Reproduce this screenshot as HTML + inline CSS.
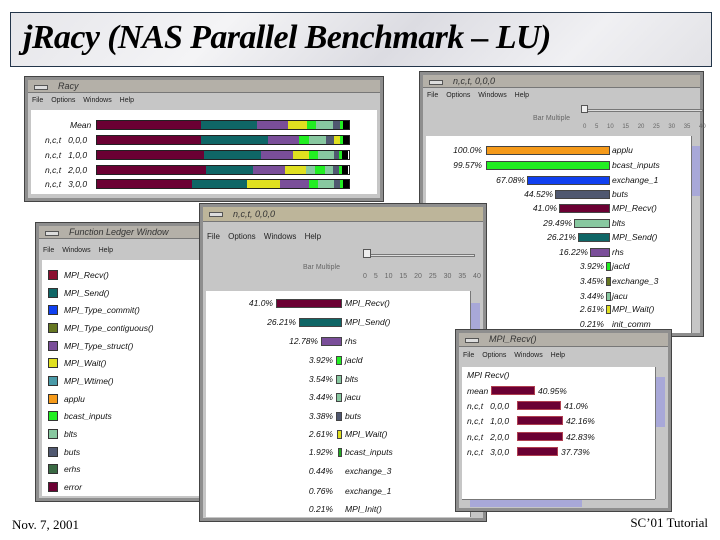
<!DOCTYPE html>
<html><head><meta charset="utf-8"><style>
*{margin:0;padding:0;box-sizing:border-box}
body{width:720px;height:540px;background:#fff;position:relative;overflow:hidden;font-family:"Liberation Sans",sans-serif}
.abs{position:absolute}
.title{left:10px;top:12px;width:702px;height:55px;border:1px solid #23354a;background:linear-gradient(135deg,#e6e6ea,#f4f4f6 30%,#dcdce2 55%,#f0f0f3 80%,#e2e2e6)}
.title span{position:absolute;left:12px;top:6px;font:italic bold 34px "Liberation Serif",serif;color:#000;letter-spacing:-0.6px}
.win{position:absolute;background:#c6c6c6;border:3px solid #8e8e8e;outline:1px solid #444}
.tb{position:absolute;left:0;right:0;top:0;height:13px;background:#b4b0a8;border-bottom:1px solid #777;font:italic 9px "Liberation Sans",sans-serif;color:#333;padding-left:30px;line-height:13px}
.tb:before{content:"";position:absolute;left:6px;top:5px;width:12px;height:3px;background:#ddd;border:1px solid #555}
.menu{position:absolute;left:4px;font-size:7px;color:#222;word-spacing:6px}
.wh{position:absolute;background:#fff;border:1px solid #888}
.t{position:absolute;font:italic 8.5px "Liberation Sans",sans-serif;color:#111;white-space:nowrap}
.b{position:absolute;height:9px;border:1px solid #444}
.sw{position:absolute;width:10px;height:10px;border:1px solid #333}
.sb{position:absolute;background:#bfbfcf;border-left:1px solid #777}
.seg{display:flex;position:absolute;height:10px;border:1px solid #222}
.seg i{display:block;height:100%}
.foot{position:absolute;font:13px "Liberation Serif",serif;color:#000}
</style></head><body>
<div class="abs title"><span>jRacy (NAS Parallel Benchmark – LU)</span></div>

<!-- W1 -->
<div class="win" style="left:25px;top:77px;width:358px;height:124px">
 <div class="tb">Racy</div>
 <div class="menu" style="top:17px">File Options Windows Help</div>
 <div class="wh" style="left:3px;top:30px;width:346px;height:84px;border:none"></div>
</div>
<div class="t" style="left:70px;top:120px">Mean</div>
<div class="t" style="left:45px;top:135px">n,c,t &nbsp; 0,0,0</div>
<div class="t" style="left:45px;top:150px">n,c,t &nbsp; 1,0,0</div>
<div class="t" style="left:45px;top:165px">n,c,t &nbsp; 2,0,0</div>
<div class="t" style="left:45px;top:179px">n,c,t &nbsp; 3,0,0</div>
<div class="seg" style="left:96px;top:120px;width:254px"><i style="width:104px;background:#6b0033"></i><i style="width:56px;background:#0f6666"></i><i style="width:31px;background:#7a4e99"></i><i style="width:19px;background:#e0e020"></i><i style="width:9px;background:#22ee22"></i><i style="width:9px;background:#88c8a0"></i><i style="width:8px;background:#88c8a0"></i><i style="width:7px;background:#505870"></i><i style="width:3px;background:#22ee22"></i><i style="width:6px;background:#000"></i></div>
<div class="seg" style="left:96px;top:135px;width:254px"><i style="width:104px;background:#6b0033"></i><i style="width:67px;background:#0f6666"></i><i style="width:31px;background:#7a4e99"></i><i style="width:10px;background:#22ee22"></i><i style="width:9px;background:#88c8a0"></i><i style="width:8px;background:#88c8a0"></i><i style="width:8px;background:#505870"></i><i style="width:6px;background:#e0e020"></i><i style="width:3px;background:#22ee22"></i><i style="width:6px;background:#000"></i></div>
<div class="seg" style="left:96px;top:150px;width:254px"><i style="width:107px;background:#6b0033"></i><i style="width:57px;background:#0f6666"></i><i style="width:32px;background:#7a4e99"></i><i style="width:16px;background:#e0e020"></i><i style="width:9px;background:#22ee22"></i><i style="width:8px;background:#88c8a0"></i><i style="width:8px;background:#88c8a0"></i><i style="width:5px;background:#505870"></i><i style="width:3px;background:#22ee22"></i><i style="width:6px;background:#000"></i></div>
<div class="seg" style="left:96px;top:165px;width:254px"><i style="width:109px;background:#6b0033"></i><i style="width:47px;background:#0f6666"></i><i style="width:32px;background:#7a4e99"></i><i style="width:21px;background:#e0e020"></i><i style="width:9px;background:#88c8a0"></i><i style="width:10px;background:#22ee22"></i><i style="width:8px;background:#88c8a0"></i><i style="width:6px;background:#505870"></i><i style="width:3px;background:#22ee22"></i><i style="width:6px;background:#000"></i></div>
<div class="seg" style="left:96px;top:179px;width:254px"><i style="width:96px;background:#6b0033"></i><i style="width:55px;background:#0f6666"></i><i style="width:33px;background:#e0e020"></i><i style="width:30px;background:#7a4e99"></i><i style="width:9px;background:#22ee22"></i><i style="width:8px;background:#88c8a0"></i><i style="width:8px;background:#88c8a0"></i><i style="width:6px;background:#505870"></i><i style="width:3px;background:#22ee22"></i><i style="width:6px;background:#000"></i></div>

<!-- W2 -->
<div class="win" style="left:420px;top:72px;width:283px;height:264px">
 <div class="tb">n,c,t, 0,0,0</div>
 <div class="menu" style="top:17px">File Options Windows Help</div>
 <div class="t" style="left:110px;top:40px;font-size:7px;font-style:normal;color:#666">Bar Multiple</div>
 <div class="abs" style="left:160px;top:34px;width:120px;height:3px;border:1px solid #777;background:#ddd"></div>
 <div class="abs" style="left:158px;top:30px;width:7px;height:8px;background:#eee;border:1px solid #555"></div>
 <div class="t" style="left:160px;top:49px;font-size:6px;font-style:normal;color:#666;word-spacing:7px">0 5 10 15 20 25 30 35 40</div>
 <div class="wh" style="left:3px;top:61px;width:265px;height:197px;border:none"></div>
 <div class="sb" style="left:268px;top:61px;width:9px;height:197px;background:linear-gradient(#c6c6c6 0,#c6c6c6 10px,#a8a8d8 10px,#a8a8d8 60px,#c6c6c6 60px)"></div>
</div>
<div class="t" style="right:238px;top:145px">100.0%</div><div class="b" style="left:486px;top:146px;width:124px;background:#f59a1a"></div><div class="t" style="left:612px;top:145px">applu</div>
<div class="t" style="right:238px;top:160px">99.57%</div><div class="b" style="left:486px;top:161px;width:124px;background:#22ee22"></div><div class="t" style="left:612px;top:160px">bcast_inputs</div>
<div class="t" style="right:195px;top:175px">67.08%</div><div class="b" style="left:527px;top:176px;width:83px;background:#1040f0"></div><div class="t" style="left:612px;top:175px">exchange_1</div>
<div class="t" style="right:167px;top:189px">44.52%</div><div class="b" style="left:555px;top:190px;width:55px;background:#505870"></div><div class="t" style="left:612px;top:189px">buts</div>
<div class="t" style="right:163px;top:203px">41.0%</div><div class="b" style="left:559px;top:204px;width:51px;background:#6b0033"></div><div class="t" style="left:612px;top:203px">MPI_Recv()</div>
<div class="t" style="right:148px;top:218px">29.49%</div><div class="b" style="left:574px;top:219px;width:36px;background:#88c8a0"></div><div class="t" style="left:612px;top:218px">blts</div>
<div class="t" style="right:144px;top:232px">26.21%</div><div class="b" style="left:578px;top:233px;width:32px;background:#0f6666"></div><div class="t" style="left:612px;top:232px">MPI_Send()</div>
<div class="t" style="right:132px;top:247px">16.22%</div><div class="b" style="left:590px;top:248px;width:20px;background:#7a4e99"></div><div class="t" style="left:612px;top:247px">rhs</div>
<div class="t" style="right:116px;top:261px">3.92%</div><div class="b" style="left:606px;top:262px;width:5px;background:#22ee22"></div><div class="t" style="left:612px;top:261px">jacld</div>
<div class="t" style="right:116px;top:276px">3.45%</div><div class="b" style="left:606px;top:277px;width:5px;background:#667722"></div><div class="t" style="left:612px;top:276px">exchange_3</div>
<div class="t" style="right:116px;top:291px">3.44%</div><div class="b" style="left:606px;top:292px;width:5px;background:#88c8a0"></div><div class="t" style="left:612px;top:291px">jacu</div>
<div class="t" style="right:116px;top:304px">2.61%</div><div class="b" style="left:606px;top:305px;width:5px;background:#e0e020"></div><div class="t" style="left:612px;top:304px">MPI_Wait()</div>
<div class="t" style="right:116px;top:319px">0.21%</div><div class="t" style="left:612px;top:319px">init_comm</div>

<!-- W3 -->
<div class="win" style="left:36px;top:223px;width:170px;height:278px">
 <div class="tb">Function Ledger Window</div>
 <div class="menu" style="top:21px">File Windows Help</div>
 <div class="wh" style="left:3px;top:34px;width:160px;height:236px;border:none"></div>
</div>
<div class="sw" style="left:48px;top:270px;background:#8b1030"></div><div class="t" style="left:64px;top:270px">MPI_Recv()</div>
<div class="sw" style="left:48px;top:288px;background:#0f6666"></div><div class="t" style="left:64px;top:288px">MPI_Send()</div>
<div class="sw" style="left:48px;top:305px;background:#1040f0"></div><div class="t" style="left:64px;top:305px">MPI_Type_commit()</div>
<div class="sw" style="left:48px;top:323px;background:#667722"></div><div class="t" style="left:64px;top:323px">MPI_Type_contiguous()</div>
<div class="sw" style="left:48px;top:341px;background:#7a4e99"></div><div class="t" style="left:64px;top:341px">MPI_Type_struct()</div>
<div class="sw" style="left:48px;top:358px;background:#e0e020"></div><div class="t" style="left:64px;top:358px">MPI_Wait()</div>
<div class="sw" style="left:48px;top:376px;background:#4a9aa8"></div><div class="t" style="left:64px;top:376px">MPI_Wtime()</div>
<div class="sw" style="left:48px;top:394px;background:#f59a1a"></div><div class="t" style="left:64px;top:394px">applu</div>
<div class="sw" style="left:48px;top:411px;background:#22ee22"></div><div class="t" style="left:64px;top:411px">bcast_inputs</div>
<div class="sw" style="left:48px;top:429px;background:#88c8a0"></div><div class="t" style="left:64px;top:429px">blts</div>
<div class="sw" style="left:48px;top:447px;background:#505870"></div><div class="t" style="left:64px;top:447px">buts</div>
<div class="sw" style="left:48px;top:464px;background:#3a6a44"></div><div class="t" style="left:64px;top:464px">erhs</div>
<div class="sw" style="left:48px;top:482px;background:#6b0033"></div><div class="t" style="left:64px;top:482px">error</div>

<!-- W4 -->
<div class="win" style="left:200px;top:204px;width:286px;height:317px">
 <div class="tb" style="background:#bdb59a;height:15px;line-height:15px">n,c,t, 0,0,0</div>
 <div class="menu" style="top:25px;font-size:8px">File Options Windows Help</div>
 <div class="t" style="left:100px;top:57px;font-size:7px;font-style:normal;color:#666">Bar Multiple</div>
 <div class="abs" style="left:162px;top:47px;width:110px;height:3px;border:1px solid #777;background:#ddd"></div>
 <div class="abs" style="left:160px;top:42px;width:8px;height:9px;background:#eee;border:1px solid #555"></div>
 <div class="t" style="left:160px;top:66px;font-size:7px;font-style:normal;color:#666;word-spacing:5px">0 5 10 15 20 25 30 35 40</div>
 <div class="wh" style="left:3px;top:84px;width:264px;height:226px;border:none"></div>
 <div class="sb" style="left:267px;top:84px;width:10px;height:226px;background:linear-gradient(#c6c6c6 0,#c6c6c6 12px,#a8a8d8 12px,#a8a8d8 120px,#c6c6c6 120px)"></div>
</div>
<div class="t" style="right:447px;top:298px">41.0%</div><div class="b" style="left:276px;top:299px;width:66px;background:#6b0033"></div><div class="t" style="left:345px;top:298px">MPI_Recv()</div>
<div class="t" style="right:424px;top:317px">26.21%</div><div class="b" style="left:299px;top:318px;width:43px;background:#0f6666"></div><div class="t" style="left:345px;top:317px">MPI_Send()</div>
<div class="t" style="right:402px;top:336px">12.78%</div><div class="b" style="left:321px;top:337px;width:21px;background:#7a4e99"></div><div class="t" style="left:345px;top:336px">rhs</div>
<div class="t" style="right:387px;top:355px">3.92%</div><div class="b" style="left:336px;top:356px;width:6px;background:#22ee22"></div><div class="t" style="left:345px;top:355px">jacld</div>
<div class="t" style="right:387px;top:374px">3.54%</div><div class="b" style="left:336px;top:375px;width:6px;background:#88c8a0"></div><div class="t" style="left:345px;top:374px">blts</div>
<div class="t" style="right:387px;top:392px">3.44%</div><div class="b" style="left:336px;top:393px;width:6px;background:#88c8a0"></div><div class="t" style="left:345px;top:392px">jacu</div>
<div class="t" style="right:387px;top:411px">3.38%</div><div class="b" style="left:336px;top:412px;width:6px;background:#505870"></div><div class="t" style="left:345px;top:411px">buts</div>
<div class="t" style="right:387px;top:429px">2.61%</div><div class="b" style="left:337px;top:430px;width:5px;background:#e0e020"></div><div class="t" style="left:345px;top:429px">MPI_Wait()</div>
<div class="t" style="right:387px;top:447px">1.92%</div><div class="b" style="left:338px;top:448px;width:4px;background:#22aa22"></div><div class="t" style="left:345px;top:447px">bcast_inputs</div>
<div class="t" style="right:387px;top:466px">0.44%</div><div class="t" style="left:345px;top:466px">exchange_3</div>
<div class="t" style="right:387px;top:486px">0.76%</div><div class="t" style="left:345px;top:486px">exchange_1</div>
<div class="t" style="right:387px;top:504px">0.21%</div><div class="t" style="left:345px;top:504px">MPI_Init()</div>

<!-- W5 -->
<div class="win" style="left:456px;top:330px;width:215px;height:181px">
 <div class="tb" style="height:14px">MPI_Recv()</div>
 <div class="menu" style="top:19px">File Options Windows Help</div>
 <div class="wh" style="left:3px;top:34px;width:193px;height:132px;border:none"></div>
 <div class="sb" style="left:196px;top:34px;width:10px;height:132px;background:linear-gradient(#c6c6c6 0,#c6c6c6 10px,#a8a8d8 10px,#a8a8d8 60px,#c6c6c6 60px)"></div>
 <div class="sb" style="left:3px;top:166px;width:193px;height:8px;border-top:1px solid #777;border-left:none;background:linear-gradient(90deg,#c6c6c6 0,#c6c6c6 8px,#a8a8d8 8px,#a8a8d8 120px,#c6c6c6 120px)"></div>
</div>
<div class="t" style="left:467px;top:370px">MPI Recv()</div>
<div class="t" style="left:467px;top:386px">mean</div><div class="b" style="left:491px;top:386px;width:44px;background:#6b0033;border-color:#b04050"></div><div class="t" style="left:538px;top:386px">40.95%</div>
<div class="t" style="left:467px;top:401px">n,c,t &nbsp; 0,0,0</div><div class="b" style="left:517px;top:401px;width:44px;background:#6b0033;border-color:#b04050"></div><div class="t" style="left:564px;top:401px">41.0%</div>
<div class="t" style="left:467px;top:416px">n,c,t &nbsp; 1,0,0</div><div class="b" style="left:517px;top:416px;width:46px;background:#6b0033;border-color:#b04050"></div><div class="t" style="left:566px;top:416px">42.16%</div>
<div class="t" style="left:467px;top:432px">n,c,t &nbsp; 2,0,0</div><div class="b" style="left:517px;top:432px;width:46px;background:#6b0033;border-color:#b04050"></div><div class="t" style="left:566px;top:432px">42.83%</div>
<div class="t" style="left:467px;top:447px">n,c,t &nbsp; 3,0,0</div><div class="b" style="left:517px;top:447px;width:41px;background:#6b0033;border-color:#b04050"></div><div class="t" style="left:561px;top:447px">37.73%</div>

<div class="foot" style="left:12px;top:517px">Nov. 7, 2001</div>
<div class="foot" style="right:12px;top:515px">SC’01 Tutorial</div>
</body></html>
